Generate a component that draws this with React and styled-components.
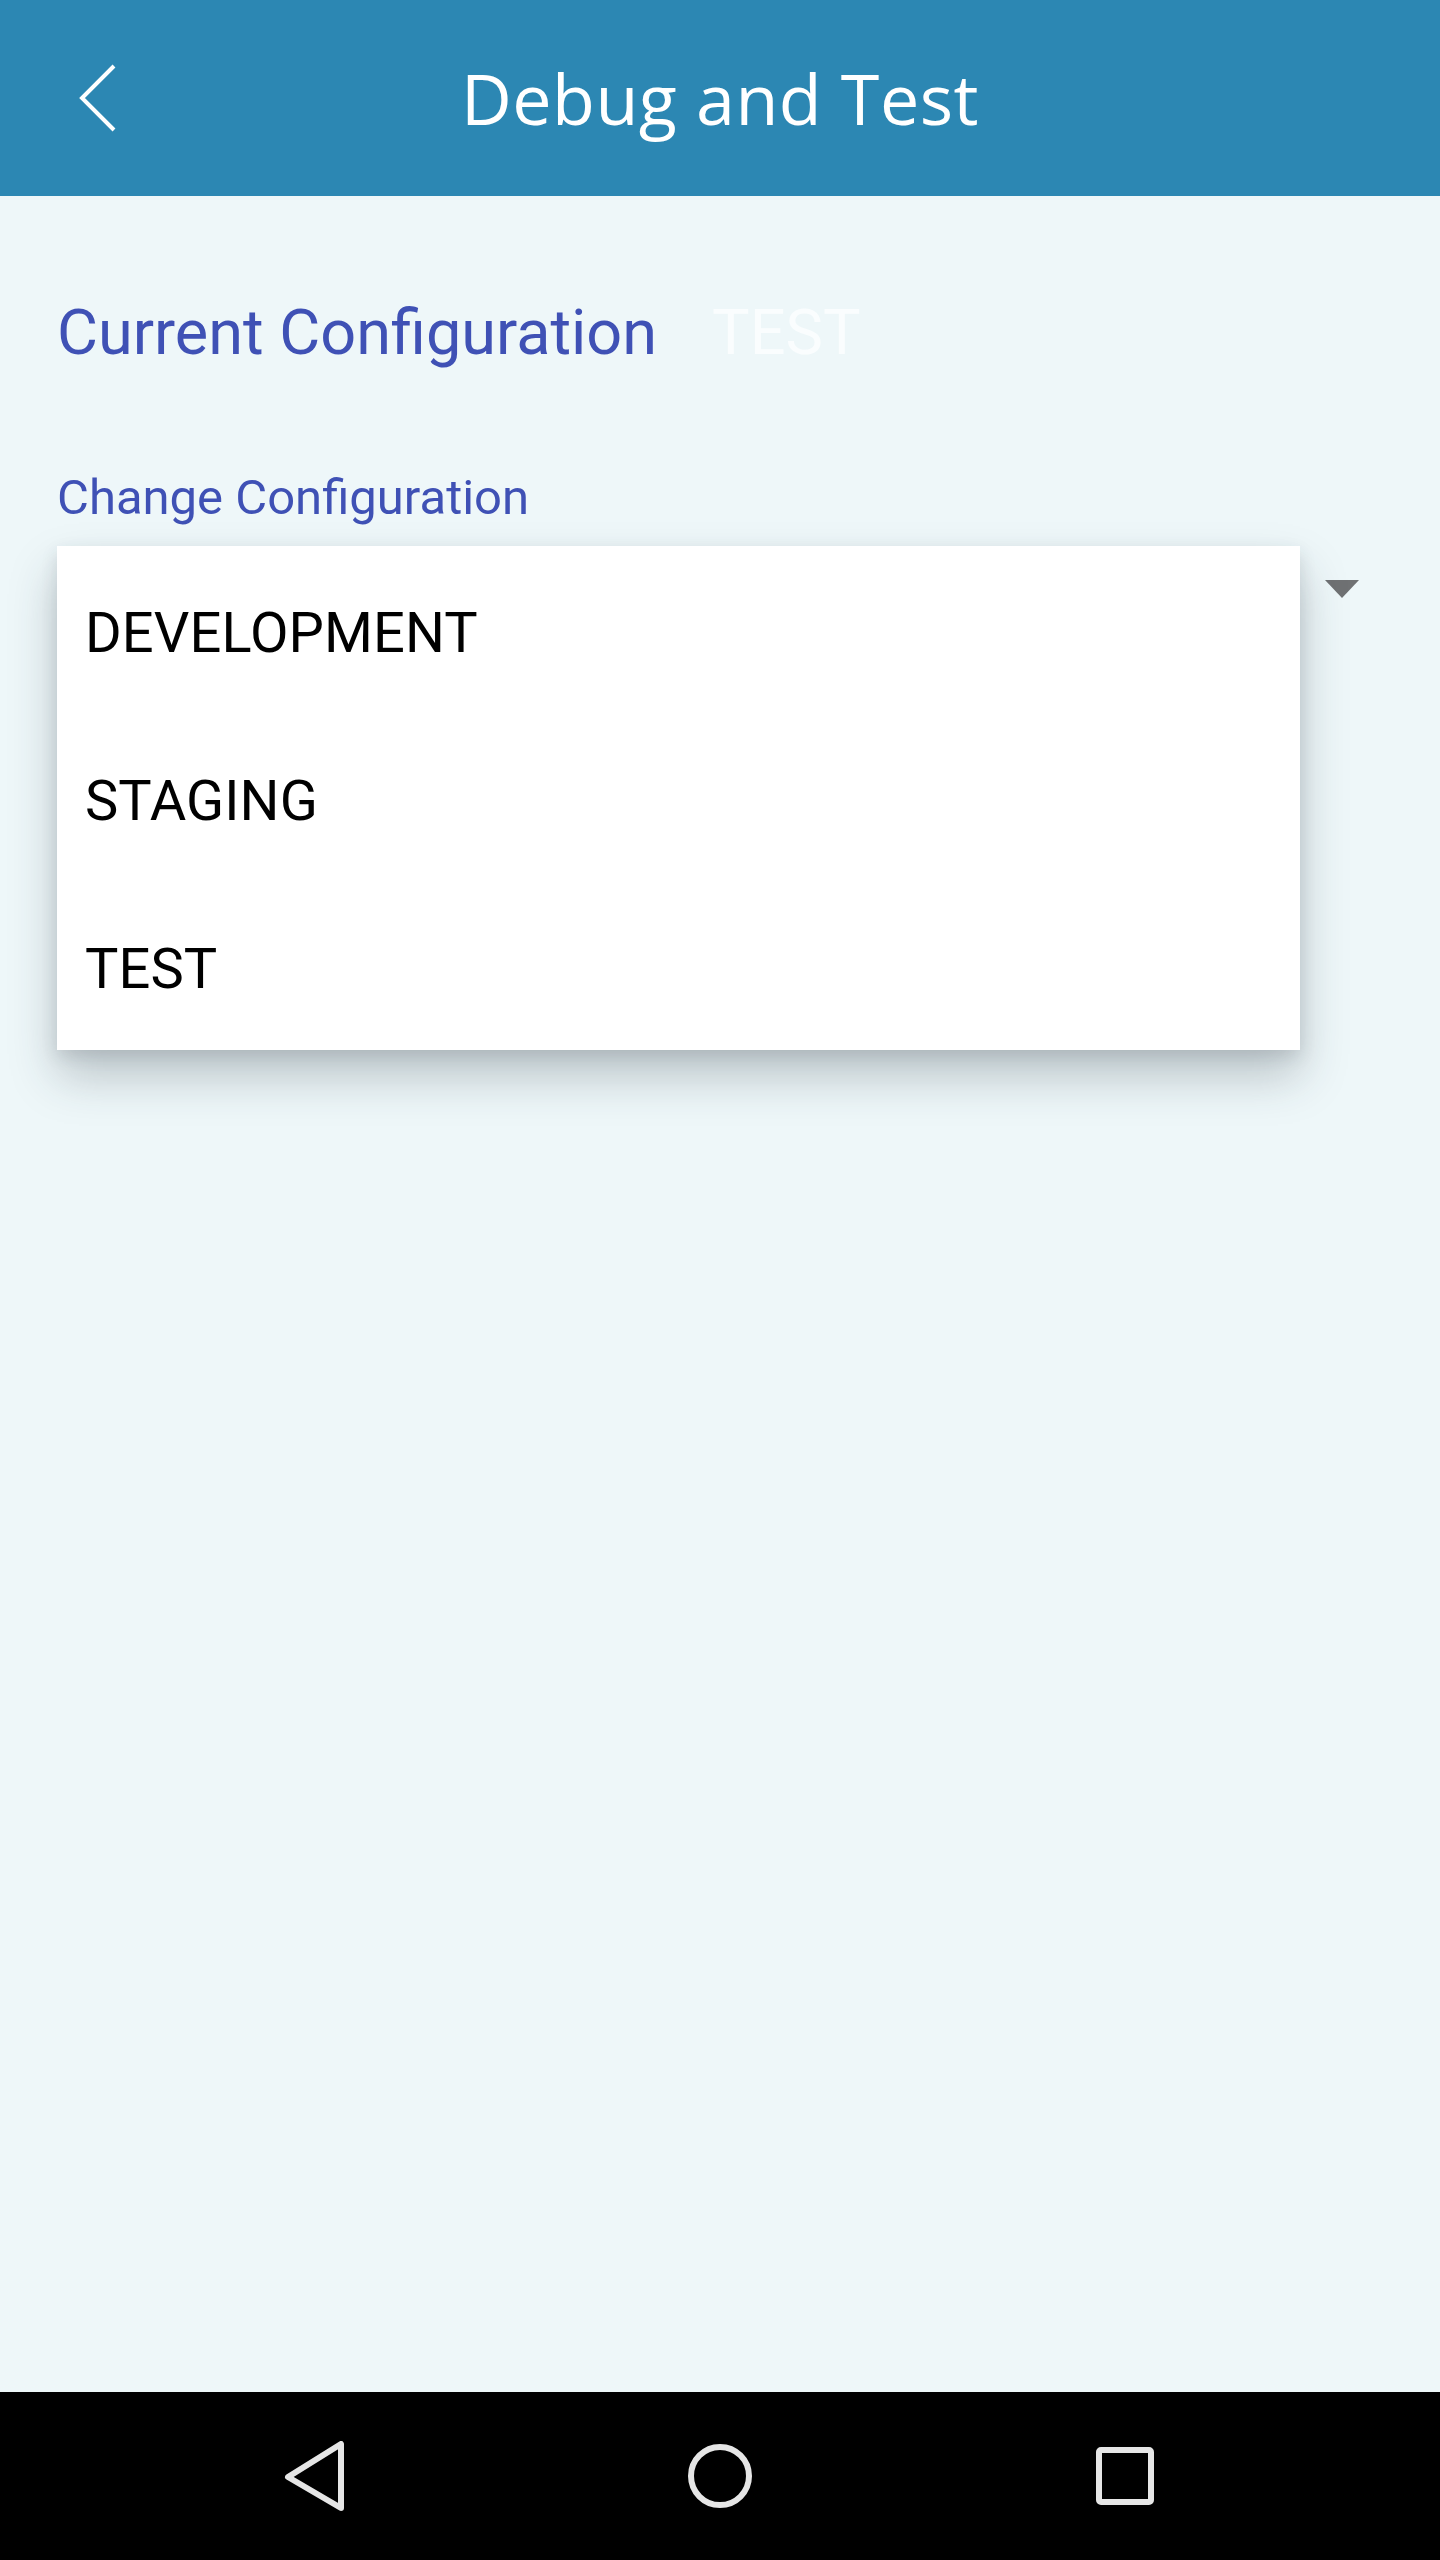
import React, { useState } from 'react'
import styled, { createGlobalStyle } from 'styled-components'

const GlobalStyle = createGlobalStyle`
  html, body {
    margin: 0;
    padding: 0;
    background: #eef7f9;
  }
  * {
    box-sizing: border-box;
  }
`

const Page = styled.div`
  width: 1440px;
  min-height: 2560px;
  display: flex;
  flex-direction: column;
  background: #eef7f9;
  font-family: Roboto, "Liberation Sans", sans-serif;
`

const Header = styled.header`
  height: 196px;
  background: #2c87b3;
  display: grid;
  grid-template-columns: 1fr auto 1fr;
  align-items: center;
`

const BackButton = styled.button`
  justify-self: start;
  margin-left: 78px;
  width: 42px;
  height: 72px;
  padding: 0;
  border: none;
  background: transparent;
  display: flex;
  align-items: center;
  justify-content: center;
`

const Title = styled.h1`
  margin: 0;
  color: #ffffff;
  font-family: "Open Sans", "DejaVu Sans", sans-serif;
  font-weight: 400;
  font-size: 70px;
  letter-spacing: 0.5px;
  line-height: 1;
`

const Content = styled.main`
  flex: 1;
  padding: 0 57px;
`

const CurrentRow = styled.div`
  margin-top: 100px;
  display: flex;
  gap: 55px;
  font-size: 63px;
  line-height: 74px;
`

const CurrentLabel = styled.span`
  color: #3f51b5;
`

const CurrentValue = styled.span`
  color: #fafdfe;
`

const FieldLabel = styled.div`
  margin-top: 97px;
  color: #3f51b5;
  font-size: 49px;
  line-height: 61px;
`

const Spinner = styled.div`
  position: relative;
  height: 122px;
  display: flex;
  align-items: center;
  justify-content: flex-end;
  padding-right: 24px;
`

const Caret = styled.div`
  width: 0;
  height: 0;
  border-left: 17px solid transparent;
  border-right: 17px solid transparent;
  border-top: 18px solid #6f7173;
`

const Menu = styled.ul`
  position: absolute;
  top: 18px;
  left: 0;
  width: 1243px;
  margin: 0;
  padding: 0;
  list-style: none;
  background: #ffffff;
  box-shadow: 0 26px 44px rgba(40, 50, 60, 0.26), 0 6px 16px rgba(40, 50, 60, 0.12);
  z-index: 2;
`

const MenuItem = styled.li`
  height: 168px;
  display: flex;
  align-items: center;
  padding: 6px 0 0 28px;
  color: #000000;
  font-size: 56px;
  letter-spacing: 0.1px;
`

const NavBar = styled.nav`
  height: 168px;
  background: #000000;
  display: flex;
  justify-content: center;
  align-items: center;
`

const NavSlot = styled.div`
  width: 405px;
  display: flex;
  justify-content: center;
  align-items: center;
`

const options = ['DEVELOPMENT', 'STAGING', 'TEST']

const App = () => {
  const [current, setCurrent] = useState('TEST')
  const [open, setOpen] = useState(true)

  return (
    <Page>
      <GlobalStyle />
      <Header>
        <BackButton aria-label="Back">
          <svg width="42" height="72" viewBox="0 0 42 72">
            <polyline points="36,4 4,36 36,68" fill="none" stroke="#ffffff" strokeWidth="4" strokeLinejoin="miter" />
          </svg>
        </BackButton>
        <Title>Debug and Test</Title>
        <div />
      </Header>
      <Content>
        <CurrentRow>
          <CurrentLabel>Current Configuration</CurrentLabel>
          <CurrentValue>{current}</CurrentValue>
        </CurrentRow>
        <FieldLabel>Change Configuration</FieldLabel>
        <Spinner onClick={() => setOpen(!open)}>
          <Caret />
          {open && (
            <Menu>
              {options.map(o => (
                <MenuItem key={o} onClick={() => setCurrent(o)}>{o}</MenuItem>
              ))}
            </Menu>
          )}
        </Spinner>
      </Content>
      <NavBar>
        <NavSlot>
          <svg width="64" height="70" viewBox="0 0 64 70">
            <path d="M58 3 L58 67 L5 36 Z" fill="none" stroke="#e6e6e6" strokeWidth="6" strokeLinejoin="round" />
          </svg>
        </NavSlot>
        <NavSlot>
          <svg width="70" height="70" viewBox="0 0 70 70">
            <circle cx="35" cy="35" r="29" fill="none" stroke="#e6e6e6" strokeWidth="6" />
          </svg>
        </NavSlot>
        <NavSlot>
          <svg width="62" height="62" viewBox="0 0 62 62">
            <rect x="5" y="5" width="52" height="52" rx="2" fill="none" stroke="#e6e6e6" strokeWidth="6" />
          </svg>
        </NavSlot>
      </NavBar>
    </Page>
  )
}

export default App
